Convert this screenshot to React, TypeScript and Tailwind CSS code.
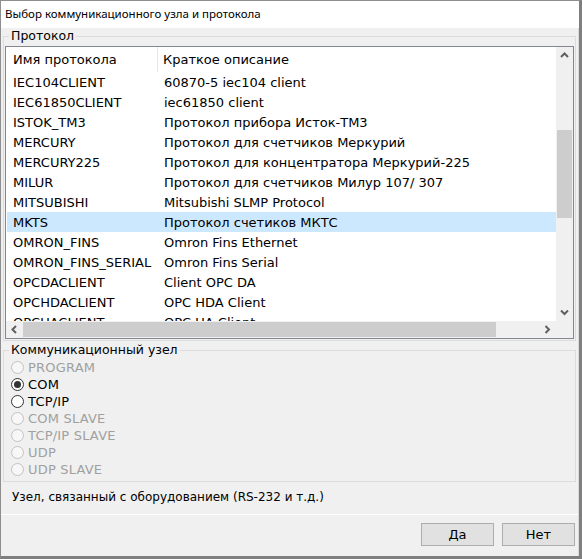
import React from "react";

type Row = { name: string; desc: string };

const rows: Row[] = [
  { name: "IEC104CLIENT", desc: "60870-5 iec104 client" },
  { name: "IEC61850CLIENT", desc: "iec61850 client" },
  { name: "ISTOK_TM3", desc: "Протокол прибора Исток-ТМ3" },
  { name: "MERCURY", desc: "Протокол для счетчиков Меркурий" },
  { name: "MERCURY225", desc: "Протокол для концентратора Меркурий-225" },
  { name: "MILUR", desc: "Протокол для счетчиков Милур 107/ 307" },
  { name: "MITSUBISHI", desc: "Mitsubishi SLMP Protocol" },
  { name: "MKTS", desc: "Протокол счетиков МКТС" },
  { name: "OMRON_FINS", desc: "Omron Fins Ethernet" },
  { name: "OMRON_FINS_SERIAL", desc: "Omron Fins Serial" },
  { name: "OPCDACLIENT", desc: "Client OPC DA" },
  { name: "OPCHDACLIENT", desc: "OPC HDA Client" },
  { name: "OPCUACLIENT", desc: "OPC UA Client" },
];

const nodes = [
  { label: "PROGRAM", disabled: true },
  { label: "COM", checked: true },
  { label: "TCP/IP" },
  { label: "COM SLAVE", disabled: true },
  { label: "TCP/IP SLAVE", disabled: true },
  { label: "UDP", disabled: true },
  { label: "UDP SLAVE", disabled: true },
];

function Chevron({ dir }: { dir: "up" | "down" | "left" | "right" }) {
  const pts =
    dir === "up"
      ? "1,5 4.5,1.5 8,5"
      : dir === "down"
      ? "1,1.5 4.5,5 8,1.5"
      : dir === "left"
      ? "5,1 1.5,4.5 5,8"
      : "1.5,1 5,4.5 1.5,8";
  const w = dir === "up" || dir === "down" ? 9 : 7;
  const h = dir === "up" || dir === "down" ? 7 : 9;
  return (
    <svg width={w} height={h} viewBox={`0 0 ${w} ${h}`}>
      <polyline points={pts} fill="none" stroke="#606060" strokeWidth="2" />
    </svg>
  );
}

function Radio({
  label,
  checked,
  disabled,
}: {
  label: string;
  checked?: boolean;
  disabled?: boolean;
}) {
  return (
    <div className="h-[17px] flex items-center">
      <span
        className={
          disabled
            ? "w-[13px] h-[13px] rounded-full border border-[#c2c2c2] bg-[#f7f7f7] flex items-center justify-center"
            : "w-[13px] h-[13px] rounded-full border border-[#333333] bg-white flex items-center justify-center"
        }
      >
        {checked && <span className="w-[7px] h-[7px] rounded-full bg-[#333333]" />}
      </span>
      <span
        className={
          disabled
            ? "ml-[4px] text-[#a0a0a0] tracking-[0.2px]"
            : "ml-[4px] text-black tracking-[0.2px]"
        }
      >
        {label}
      </span>
    </div>
  );
}

export default function App() {
  return (
    <div className="w-[582px] h-[559px] flex flex-col border-t border-l border-[#8e8e8e] border-r-[3px] border-r-[#7f7f7f] border-b-[3px] border-b-[#7f7f7f] font-['DejaVu_Sans',sans-serif] text-[13px] leading-[16px] text-black select-none">
      {/* caption */}
      <div className="h-[27px] shrink-0 bg-white flex items-center pl-[4px] pb-[1px] font-['Noto_Sans',sans-serif] text-[11.5px]">
        Выбор коммуникационного узла и протокола
      </div>

      {/* client area */}
      <div className="flex-1 bg-[#f0f0f0] flex flex-col border-r border-r-[#dadada]">
        {/* protocol group */}
        <fieldset className="mx-[2px] border border-[#dcdcdc] pl-[1px] pr-[1px] pt-[2px] pb-[1px]">
          <legend className="ml-[4px] px-[2px] leading-[16px] text-[12.5px]">Протокол</legend>
          <div className="h-[293px] border border-[#828790] bg-white grid grid-cols-[1fr_17px] grid-rows-[1fr_17px]">
            <div className="overflow-hidden">
              <div className="h-[25px] flex items-center">
                <div className="w-[151px] pl-[7px] pt-px h-full flex items-center">Имя протокола</div>
                <div className="w-px h-full bg-[#e5e5e5]" />
                <div className="pl-[5px] pt-px">Краткое описание</div>
              </div>
              {rows.map((r) => (
                <div
                  key={r.name}
                  className={
                    r.name === "MKTS"
                      ? "h-[20px] flex items-center pt-px bg-[#cce8ff] ml-px"
                      : "h-[20px] flex items-center pt-px ml-px"
                  }
                >
                  <div className="w-[151px] pl-[6px] whitespace-nowrap">{r.name}</div>
                  <div className="pl-[6px] whitespace-nowrap">{r.desc}</div>
                </div>
              ))}
            </div>

            {/* vertical scrollbar */}
            <div className="bg-[#f0f0f0] flex flex-col">
              <div className="h-[17px] flex items-center justify-center">
                <Chevron dir="up" />
              </div>
              <div className="h-[66px]" />
              <div className="h-[88px] mx-[1px] bg-[#cdcdcd]" />
              <div className="flex-1" />
              <div className="h-[17px] flex items-center justify-center">
                <Chevron dir="down" />
              </div>
            </div>

            {/* horizontal scrollbar */}
            <div className="bg-[#f0f0f0] flex">
              <div className="w-[17px] flex items-center justify-center">
                <Chevron dir="left" />
              </div>
              <div className="w-[473px] my-[1px] bg-[#cdcdcd]" />
              <div className="flex-1" />
              <div className="w-[17px] flex items-center justify-center">
                <Chevron dir="right" />
              </div>
            </div>
            <div className="bg-[#f0f0f0]" />
          </div>
        </fieldset>

        {/* node group */}
        <fieldset className="mx-[2px] mt-[1px] border border-[#dcdcdc] pl-[7px] pt-[1px] pb-[3px]">
          <legend className="-ml-[2px] px-[2px] leading-[16px] text-[12.5px]">Коммуникационный узел</legend>
          {nodes.map((n) => (
            <Radio key={n.label} label={n.label} checked={n.checked} disabled={n.disabled} />
          ))}
        </fieldset>

        {/* description */}
        <div className="h-[33px] shrink-0 pl-[11px] pt-[7px] border-b border-b-white text-[12px]">
          Узел, связанный с оборудованием (RS-232 и т.д.)
        </div>

        {/* buttons */}
        <div className="flex justify-end gap-[8px] pt-[8px] pr-[3px]">
          <button className="w-[73px] h-[23px] border border-[#adadad] bg-[#e1e1e1] flex items-center justify-center">
            Да
          </button>
          <button className="w-[73px] h-[23px] border border-[#adadad] bg-[#e1e1e1] flex items-center justify-center">
            Нет
          </button>
        </div>
      </div>
    </div>
  );
}
